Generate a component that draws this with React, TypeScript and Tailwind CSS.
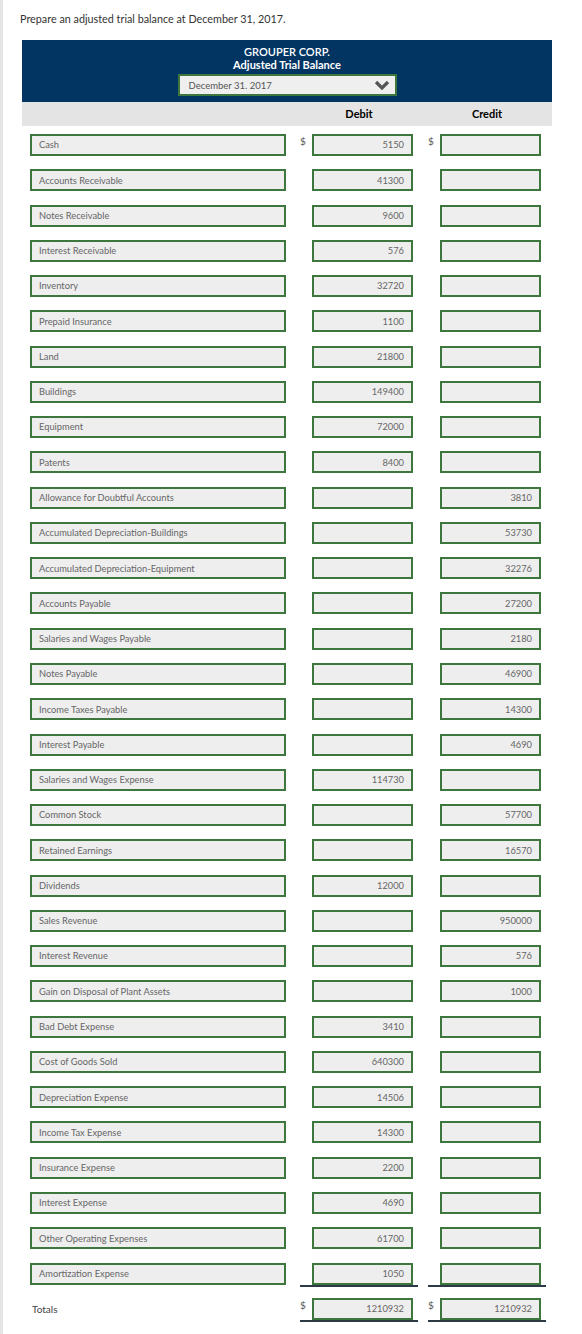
import React from 'react'

type Row = { name: string; debit?: string; credit?: string }

const rows: Row[] = [
  { name: 'Cash', debit: '5150' },
  { name: 'Accounts Receivable', debit: '41300' },
  { name: 'Notes Receivable', debit: '9600' },
  { name: 'Interest Receivable', debit: '576' },
  { name: 'Inventory', debit: '32720' },
  { name: 'Prepaid Insurance', debit: '1100' },
  { name: 'Land', debit: '21800' },
  { name: 'Buildings', debit: '149400' },
  { name: 'Equipment', debit: '72000' },
  { name: 'Patents', debit: '8400' },
  { name: 'Allowance for Doubtful Accounts', credit: '3810' },
  { name: 'Accumulated Depreciation-Buildings', credit: '53730' },
  { name: 'Accumulated Depreciation-Equipment', credit: '32276' },
  { name: 'Accounts Payable', credit: '27200' },
  { name: 'Salaries and Wages Payable', credit: '2180' },
  { name: 'Notes Payable', credit: '46900' },
  { name: 'Income Taxes Payable', credit: '14300' },
  { name: 'Interest Payable', credit: '4690' },
  { name: 'Salaries and Wages Expense', debit: '114730' },
  { name: 'Common Stock', credit: '57700' },
  { name: 'Retained Earnings', credit: '16570' },
  { name: 'Dividends', debit: '12000' },
  { name: 'Sales Revenue', credit: '950000' },
  { name: 'Interest Revenue', credit: '576' },
  { name: 'Gain on Disposal of Plant Assets', credit: '1000' },
  { name: 'Bad Debt Expense', debit: '3410' },
  { name: 'Cost of Goods Sold', debit: '640300' },
  { name: 'Depreciation Expense', debit: '14506' },
  { name: 'Income Tax Expense', debit: '14300' },
  { name: 'Insurance Expense', debit: '2200' },
  { name: 'Interest Expense', debit: '4690' },
  { name: 'Other Operating Expenses', debit: '61700' },
  { name: 'Amortization Expense', debit: '1050' },
]

function Box({ value, wide }: { value?: string; wide?: boolean }) {
  return (
    <div
      className={`h-[22px] border-2 border-[#3d773d] bg-[#eeeeee] flex items-center text-[9.3px] leading-none text-[#666] ${
        wide ? 'w-[256px] pl-[7px]' : 'w-[101px] justify-end pr-[7px]'
      }`}
    >
      {value}
    </div>
  )
}

function Money({ value, dollar, line }: { value?: string; dollar?: boolean; line?: boolean }) {
  return (
    <div className={`w-[118px] flex items-start ${line ? 'border-b-2 border-[#2c3a45]' : ''}`}>
      <span className="w-[12px] text-[10px] leading-none text-[#555] pt-[2px]">{dollar ? '$' : ''}</span>
      <Box value={value} />
    </div>
  )
}

export default function App() {
  return (
    <div className="min-h-screen bg-white border-l-[3px] border-[#e5e5e5] font-['Lato','Open_Sans',sans-serif]">
      <div className="pl-[17px] pt-[12px] text-[10.8px] leading-[13px] text-[#333]">
        Prepare an adjusted trial balance at December 31, 2017.
      </div>

      <div className="ml-[19px] mt-[15px] w-[530px]">
        {/* header */}
        <div className="h-[62px] bg-[#033563] flex flex-col items-center pt-[5px]">
          <div className="text-[11px] leading-[13px] font-semibold text-white">GROUPER CORP.</div>
          <div className="text-[11px] leading-[13px] font-bold text-white">Adjusted Trial Balance</div>
          <div className="mt-[3px] w-[219px] h-[22px] border-2 border-[#3d773d] bg-[#efefef] flex items-center justify-between pl-[9px] pr-[5px]">
            <span className="text-[9.5px] leading-none text-[#555] pt-[2px]">December 31. 2017</span>
            <svg width="16" height="10" viewBox="0 0 16 10">
              <polyline points="2,2 8,8 14,2" fill="none" stroke="#555" strokeWidth="3.2" />
            </svg>
          </div>
        </div>
        <div className="h-[24px] bg-[#e4e4e4] flex items-center text-[11px] font-bold text-black">
          <div className="w-[278px]" />
          <div className="w-[118px] text-center">Debit</div>
          <div className="ml-[10px] w-[118px] text-center">Credit</div>
        </div>

        {/* rows */}
        <div className="pt-[8px] pl-[8px] flex flex-col gap-[13.28px]">
          {rows.map((r, i) => {
            const last = i === rows.length - 1
            return (
              <div key={r.name} className="flex items-start">
                <Box value={r.name} wide />
                <div className="ml-[14px]">
                  <Money value={r.debit} dollar={i === 0} line={last} />
                </div>
                <div className="ml-[10px]">
                  <Money value={r.credit} dollar={i === 0} line={last} />
                </div>
              </div>
            )
          })}
        </div>

        {/* totals */}
        <div className="mt-[11px] pl-[10px] flex items-start">
          <div className="w-[254px] h-[22px] flex items-center text-[10px] leading-none text-[#444]">Totals</div>
          <div className="ml-[14px]">
            <Money value="1210932" dollar line />
          </div>
          <div className="ml-[10px]">
            <Money value="1210932" dollar line />
          </div>
        </div>
      </div>
    </div>
  )
}
